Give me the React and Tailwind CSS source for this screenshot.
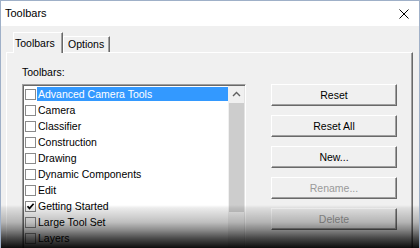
const items = [
  "Advanced Camera Tools",
  "Camera",
  "Classifier",
  "Construction",
  "Drawing",
  "Dynamic Components",
  "Edit",
  "Getting Started",
  "Large Tool Set",
  "Layers",
  "Measurements",
];

const buttons = [
  { label: "Reset", enabled: true },
  { label: "Reset All", enabled: true },
  { label: "New...", enabled: true },
  { label: "Rename...", enabled: false },
  { label: "Delete", enabled: false },
];

export default function App() {
  return (
    <div className="relative w-[420px] h-[248px] overflow-hidden bg-[#f0f0f0] border-x border-t border-[#9fb0c8] font-['Liberation_Sans',Arial,sans-serif] text-[10.5px] text-black">
      {/* title bar */}
      <div className="h-[25px] bg-white flex items-center justify-between pl-[4px] pr-[10px]">
        <span className="text-[11px] leading-none">Toolbars</span>
        <svg width="10" height="10" viewBox="0 0 10 10">
          <path d="M0.5 0.5L9.5 9.5M9.5 0.5L0.5 9.5" stroke="#000" strokeWidth="1" />
        </svg>
      </div>

      <div className="pt-[6px] pl-[5px] pr-[6px]">
        {/* tabs */}
        <div className="h-[20px] flex items-end ml-[7px]">
          <div className="relative z-10 h-[21px] w-[50px] -mb-[1px] bg-[#f0f0f0] border-l border-t border-white border-r border-r-[#696969] shadow-[inset_-1px_0_0_#a0a0a0] flex items-center pl-[1px] leading-none">
            Toolbars
          </div>
          <div className="h-[16px] w-[47px] border-l border-t border-white border-r border-r-[#696969] shadow-[inset_-1px_0_0_#a0a0a0] flex items-center pl-[4px] leading-none">
            Options
          </div>
        </div>

        {/* panel */}
        <div className="h-[300px] border-t border-l border-white border-r border-r-[#696969] shadow-[inset_-1px_0_0_#a0a0a0] pl-[15px] pt-[13px]">
          <div className="h-[12px] leading-[12px]">Toolbars:</div>
          <div className="mt-[6px] flex items-start">
            {/* list */}
            <div className="w-[224px] h-[190px] overflow-hidden border border-t-[#a0a0a0] border-l-[#a0a0a0] border-b-white border-r-white shadow-[inset_1px_1px_0_#696969,inset_-1px_-1px_0_#e3e3e3] p-[1px] bg-white flex">
              <div className="flex-1 flex flex-col">
                {items.map((it, i) => (
                  <div key={it} className="h-[16px] shrink-0 flex items-center">
                    <div className="ml-[1px] w-[11px] h-[11px] border border-[#8a8a8a] bg-white flex items-center justify-center shrink-0">
                      {it === "Getting Started" && (
                        <svg width="9" height="9" viewBox="0 0 9 9">
                          <path d="M1.5 4.2L3.5 6.4L7.6 1.8" stroke="#000" strokeWidth="1.7" fill="none" />
                        </svg>
                      )}
                    </div>
                    <div
                      className={
                        i === 0
                          ? "ml-[1px] flex-1 h-[14px] flex items-center pl-[1px] bg-[#3399ff] text-white leading-none"
                          : "ml-[1px] flex-1 h-[14px] flex items-center pl-[1px] leading-none"
                      }
                    >
                      {it}
                    </div>
                  </div>
                ))}
              </div>
              {/* scrollbar */}
              <div className="w-[16px] shrink-0 bg-[#f0f0f0] flex flex-col">
                <div className="h-[16px] shrink-0 flex items-center justify-center">
                  <svg width="9" height="6" viewBox="0 0 9 6">
                    <path d="M1 5L4.5 1.5L8 5" stroke="#606060" strokeWidth="1.4" fill="none" />
                  </svg>
                </div>
                <div className="mt-[1px] ml-[1px] w-[15px] h-[109px] shrink-0 bg-[#cdcdcd]" />
              </div>
            </div>

            {/* buttons */}
            <div className="ml-[25px] flex flex-col gap-[9px]">
              {buttons.map((b) => (
                <div
                  key={b.label}
                  className={
                    b.enabled
                      ? "w-[126px] h-[22px] flex items-center justify-center border-t border-l border-white border-r border-b border-r-[#696969] border-b-[#696969] shadow-[inset_-1px_-1px_0_#a0a0a0] leading-none"
                      : "w-[126px] h-[22px] flex items-center justify-center border-t border-l border-white border-r border-b border-r-[#696969] border-b-[#696969] shadow-[inset_-1px_-1px_0_#a0a0a0] leading-none text-[#9a9a9a]"
                  }
                >
                  {b.label}
                </div>
              ))}
            </div>
          </div>
        </div>
      </div>

      {/* bottom shadow overlay */}
      <div className="pointer-events-none absolute inset-x-0 bottom-0 h-[43px] bg-[linear-gradient(to_bottom,rgba(0,0,0,0)_0%,rgba(0,0,0,0.08)_7%,rgba(0,0,0,0.25)_40%,rgba(0,0,0,0.45)_58%,rgba(0,0,0,0.7)_77%,rgba(0,0,0,0.95)_100%)]" />
    </div>
  );
}
